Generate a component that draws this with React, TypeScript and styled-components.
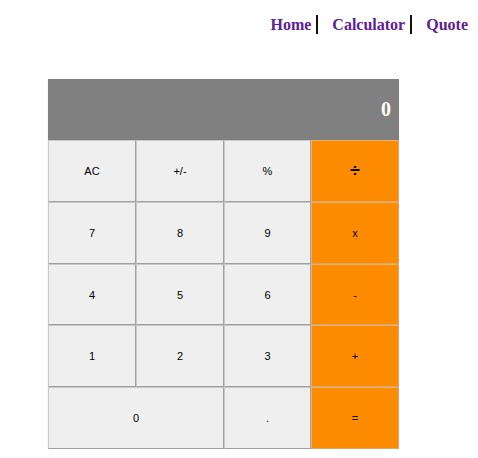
import React from 'react';
import styled, { createGlobalStyle } from 'styled-components';

const Global = createGlobalStyle`
  html, body { margin: 0; padding: 0; background: #ffffff; }
  body { font-family: "Liberation Serif", "Times New Roman", serif; }
`;

const Page = styled.div`
  display: flex;
  flex-direction: column;
  width: 478px;
`;

const Header = styled.header`
  display: flex;
  justify-content: flex-end;
  padding: 15px 10px 0 0;
  height: 19px;
`;

const NavList = styled.ul`
  display: flex;
  align-items: stretch;
  list-style: none;
  margin: 0;
  padding: 0;
`;

const NavItem = styled.li<{ $sep?: boolean }>`
  display: flex;
  align-items: center;
  padding-right: ${(p) => (p.$sep ? '5px' : '0')};
  margin-right: ${(p) => (p.$sep ? '14px' : '0')};
  border-right: ${(p) => (p.$sep ? '2px solid #111' : 'none')};
`;

const NavLink = styled.a`
  font-family: "Liberation Serif", "Times New Roman", serif;
  font-weight: bold;
  font-size: 16px;
  color: #5b2196;
  text-decoration: none;
`;

const Calc = styled.div`
  margin: 45px 0 0 48px;
  width: 351px;
  display: grid;
  grid-template-columns: 88px 88px 87px 88px;
  grid-template-rows: 61px 62px 62px 61px 62px 62px;
  box-shadow: 0 1px 1px rgba(0, 0, 0, 0.15);
`;

const Display = styled.div`
  grid-column: 1 / span 4;
  background: #808080;
  color: #ffffff;
  display: flex;
  align-items: center;
  justify-content: flex-end;
  padding-right: 8px;
  font-family: "Liberation Serif", "Times New Roman", serif;
  font-weight: bold;
  font-size: 20px;
`;

const Key = styled.button<{ $op?: boolean; $wide?: boolean; $big?: boolean }>`
  grid-column: ${(p) => (p.$wide ? 'span 2' : 'auto')};
  margin: 0;
  padding: 0;
  box-sizing: border-box;
  background: ${(p) => (p.$op ? '#ff8c00' : '#efefef')};
  border: 1px solid;
  border-color: ${(p) =>
    p.$op ? '#e8b070 #d7a772 #d7a772 #e8b070' : '#c8c8c8 #a0a0a0 #a0a0a0 #c8c8c8'};
  color: #000;
  font-family: "Liberation Sans", Arial, sans-serif;
  font-size: ${(p) => (p.$big ? '18px' : '11px')};
  font-weight: ${(p) => (p.$big ? 'bold' : 'normal')};
  display: flex;
  align-items: center;
  justify-content: center;
  cursor: pointer;
`;

const rows: { label: string; op?: boolean; wide?: boolean; big?: boolean }[] = [
  { label: 'AC' }, { label: '+/-' }, { label: '%' }, { label: '÷', op: true, big: true },
  { label: '7' }, { label: '8' }, { label: '9' }, { label: 'x', op: true },
  { label: '4' }, { label: '5' }, { label: '6' }, { label: '-', op: true },
  { label: '1' }, { label: '2' }, { label: '3' }, { label: '+', op: true },
  { label: '0', wide: true }, { label: '.' }, { label: '=', op: true },
];

export default function App() {
  return (
    <Page>
      <Global />
      <Header>
        <NavList>
          <NavItem $sep><NavLink href="#">Home</NavLink></NavItem>
          <NavItem $sep><NavLink href="#">Calculator</NavLink></NavItem>
          <NavItem><NavLink href="#">Quote</NavLink></NavItem>
        </NavList>
      </Header>
      <Calc>
        <Display>0</Display>
        {rows.map((k, i) => (
          <Key key={i} $op={k.op} $wide={k.wide} $big={k.big}>{k.label}</Key>
        ))}
      </Calc>
    </Page>
  );
}
